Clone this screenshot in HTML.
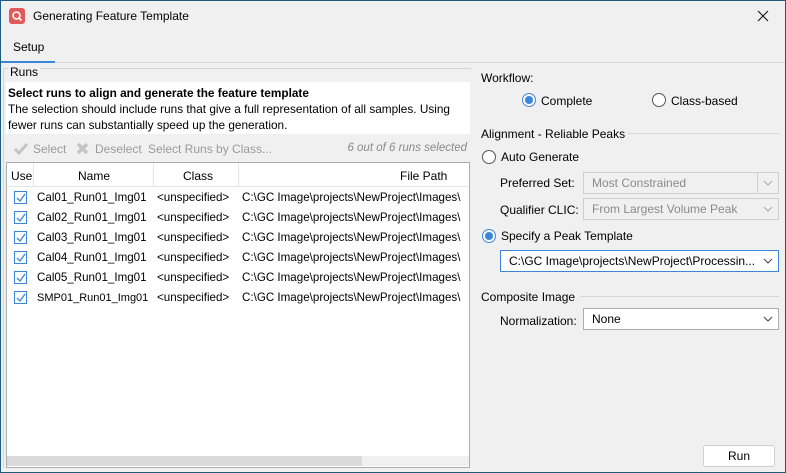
<!DOCTYPE html>
<html><head><meta charset="utf-8"><style>
*{box-sizing:border-box;margin:0;padding:0}
body{width:786px;height:473px;overflow:hidden;background:#f0f0f0;font-family:"Liberation Sans",sans-serif;font-size:12px;color:#000;position:relative}
.a{position:absolute;white-space:nowrap}
.frame{position:absolute;left:0;top:0;width:786px;height:473px;border:1px solid #1f5c80;pointer-events:none}
.radio{position:absolute;width:14px;height:14px;border-radius:50%;border:1px solid #555;background:#fff}
.radio.on{border-color:#3b86d8}
.radio.on::after{content:"";position:absolute;left:2px;top:2px;width:8px;height:8px;border-radius:50%;background:#3b86d8}
.combo{position:absolute;height:22px;border:1px solid #adadad;background:#fff;padding:0 0 0 8px;line-height:20px}
.combo.dis{background:#f0f0f0;color:#8a8a8a;border-color:#cfcfcf}
.arr{position:absolute;right:5px;top:6px;width:10px;height:8px}
.cb{position:absolute;left:14px;width:13px;height:13px;border:1px solid #3b86d8;background:#fff}
.row{position:absolute;left:6px;width:463px;height:20px;line-height:20px;overflow:hidden}
.row span{overflow:hidden}
.n{left:31px;width:118px;font-size:11.6px}
.c{left:151px;width:84px;font-size:11.6px}
.p{left:236px;width:227px;font-size:11.6px}
.line{position:absolute;height:1px;background:#d5d5d5}
</style></head><body>
<div class="frame"></div>
<div class="a" style="left:9px;top:8px;width:16px;height:16px;background:#e05a5a;border-radius:3px"></div>
<svg class="a" style="left:9px;top:8px" width="16" height="16"><circle cx="7.5" cy="7.5" r="3.5" fill="none" stroke="#fff" stroke-width="1.6"/><line x1="10" y1="10" x2="12.5" y2="12.5" stroke="#fff" stroke-width="1.6"/></svg>
<div class="a" style="left:33px;top:9px;font-size:12px">Generating Feature Template</div>
<svg class="a" style="left:757px;top:10px" width="12" height="12"><path d="M1 1L11 11M11 1L1 11" stroke="#111" stroke-width="1.1"/></svg>
<div class="a" style="left:13px;top:40px">Setup</div>
<div class="a" style="left:1px;top:61px;width:54px;height:2px;background:#3b86d8"></div>
<div class="line" style="left:55px;top:62px;width:730px;background:#d9d9d9"></div>
<div class="a" style="left:3px;top:68px;width:468px;height:400px;border-left:1px solid #d5d5d5;border-top:1px solid #d5d5d5"></div>
<div class="a" style="left:8px;top:65px;background:#f0f0f0;padding:0 2px">Runs</div>
<div class="a" style="left:6px;top:82px;width:464px;height:52px;background:#fff"></div>
<div class="a" style="left:8px;top:86px;font-weight:bold;font-size:11.8px">Select runs to align and generate the feature template</div>
<div class="a" style="left:8px;top:102px;font-size:11.8px">The selection should include runs that give a full representation of all samples. Using</div>
<div class="a" style="left:8px;top:118px;font-size:11.8px">fewer runs can substantially speed up the generation.</div>
<svg class="a" style="left:14px;top:142px" width="14" height="14"><path d="M1 7L5 11L13 2" stroke="#c4c4c4" stroke-width="3" fill="none"/></svg>
<div class="a" style="left:33px;top:142px;color:#9a9a9a">Select</div>
<svg class="a" style="left:76px;top:142px" width="13" height="13"><path d="M2 2L11 11M11 2L2 11" stroke="#c4c4c4" stroke-width="3.5"/></svg>
<div class="a" style="left:95px;top:142px;color:#9a9a9a">Deselect</div>
<div class="a" style="left:148px;top:142px;color:#9a9a9a">Select Runs by Class...</div>
<div class="a" style="right:319px;top:142px;color:#8a8a8a;font-style:italic;font-size:11.5px">6 out of 6 runs selected</div>
<div class="a" style="left:6px;top:162px;width:464px;height:306px;border:1px solid #adadad;background:#fff"></div>
<div class="a" style="left:7px;top:163px;width:462px;height:24px;border-bottom:1px solid #e5e5e5"></div>
<div class="a" style="left:33px;top:163px;width:1px;height:24px;background:#e5e5e5"></div>
<div class="a" style="left:153px;top:163px;width:1px;height:24px;background:#e5e5e5"></div>
<div class="a" style="left:238px;top:163px;width:1px;height:24px;background:#e5e5e5"></div>
<div class="a" style="left:11px;top:169px">Use</div>
<div class="a" style="left:78px;top:169px">Name</div>
<div class="a" style="left:183px;top:169px">Class</div>
<div class="a" style="left:400px;top:169px">File Path</div>
<div class="row" style="top:188px"><div class="cb" style="left:8px;top:3px"></div><svg class="a" style="left:9px;top:4px" width="12" height="12"><path d="M2 6L5 9L10 2" stroke="#3b86d8" stroke-width="1.3" fill="none"/></svg><span class="a n">Cal01_Run01_Img01</span><span class="a c">&lt;unspecified&gt;</span><span class="a p">C:\GC Image\projects\NewProject\Images\</span></div>
<div class="row" style="top:208px"><div class="cb" style="left:8px;top:3px"></div><svg class="a" style="left:9px;top:4px" width="12" height="12"><path d="M2 6L5 9L10 2" stroke="#3b86d8" stroke-width="1.3" fill="none"/></svg><span class="a n">Cal02_Run01_Img01</span><span class="a c">&lt;unspecified&gt;</span><span class="a p">C:\GC Image\projects\NewProject\Images\</span></div>
<div class="row" style="top:228px"><div class="cb" style="left:8px;top:3px"></div><svg class="a" style="left:9px;top:4px" width="12" height="12"><path d="M2 6L5 9L10 2" stroke="#3b86d8" stroke-width="1.3" fill="none"/></svg><span class="a n">Cal03_Run01_Img01</span><span class="a c">&lt;unspecified&gt;</span><span class="a p">C:\GC Image\projects\NewProject\Images\</span></div>
<div class="row" style="top:248px"><div class="cb" style="left:8px;top:3px"></div><svg class="a" style="left:9px;top:4px" width="12" height="12"><path d="M2 6L5 9L10 2" stroke="#3b86d8" stroke-width="1.3" fill="none"/></svg><span class="a n">Cal04_Run01_Img01</span><span class="a c">&lt;unspecified&gt;</span><span class="a p">C:\GC Image\projects\NewProject\Images\</span></div>
<div class="row" style="top:268px"><div class="cb" style="left:8px;top:3px"></div><svg class="a" style="left:9px;top:4px" width="12" height="12"><path d="M2 6L5 9L10 2" stroke="#3b86d8" stroke-width="1.3" fill="none"/></svg><span class="a n">Cal05_Run01_Img01</span><span class="a c">&lt;unspecified&gt;</span><span class="a p">C:\GC Image\projects\NewProject\Images\</span></div>
<div class="row" style="top:288px"><div class="cb" style="left:8px;top:3px"></div><svg class="a" style="left:9px;top:4px" width="12" height="12"><path d="M2 6L5 9L10 2" stroke="#3b86d8" stroke-width="1.3" fill="none"/></svg><span class="a n" style="font-size:11px">SMP01_Run01_Img01</span><span class="a c">&lt;unspecified&gt;</span><span class="a p">C:\GC Image\projects\NewProject\Images\</span></div>
<div class="a" style="left:7px;top:456px;width:462px;height:10px;background:#f0f0f0"></div>
<div class="a" style="left:7px;top:456px;width:355px;height:10px;background:#dadada"></div>
<div class="a" style="left:481px;top:71px">Workflow:</div>
<div class="radio on" style="left:522px;top:93px"></div>
<div class="a" style="left:541px;top:94px">Complete</div>
<div class="radio" style="left:652px;top:93px"></div>
<div class="a" style="left:671px;top:94px">Class-based</div>
<div class="a" style="left:481px;top:127px">Alignment - Reliable Peaks</div>
<div class="line" style="left:628px;top:133px;width:151px"></div>
<div class="radio" style="left:482px;top:150px"></div>
<div class="a" style="left:501px;top:150px">Auto Generate</div>
<div class="a" style="left:500px;top:176px">Preferred Set:</div>
<div class="combo dis" style="left:583px;top:172px;width:196px">Most Constrained<div class="a" style="right:20px;top:0;width:1px;height:20px;background:#cfcfcf"></div><svg class="arr" viewBox="0 0 10 8"><path d="M1 2L5 6L9 2" stroke="#aaa" fill="none"/></svg></div>
<div class="a" style="left:500px;top:203px">Qualifier CLIC:</div>
<div class="combo dis" style="left:583px;top:198px;width:196px">From Largest Volume Peak<svg class="arr" viewBox="0 0 10 8"><path d="M1 2L5 6L9 2" stroke="#aaa" fill="none"/></svg></div>
<div class="radio on" style="left:482px;top:229px"></div>
<div class="a" style="left:501px;top:229px">Specify a Peak Template</div>
<div class="combo" style="left:500px;top:250px;width:279px;border-color:#3b86d8">C:\GC Image\projects\NewProject\Processin...<svg class="arr" viewBox="0 0 10 8"><path d="M1 2L5 6L9 2" stroke="#444" fill="none"/></svg></div>
<div class="a" style="left:481px;top:290px">Composite Image</div>
<div class="line" style="left:580px;top:296px;width:199px"></div>
<div class="a" style="left:500px;top:314px">Normalization:</div>
<div class="combo" style="left:583px;top:308px;width:196px">None<svg class="arr" viewBox="0 0 10 8"><path d="M1 2L5 6L9 2" stroke="#444" fill="none"/></svg></div>
<div class="a" style="left:703px;top:445px;width:72px;height:22px;border:1px solid #cfcfcf;border-radius:3px;background:#fff;text-align:center;line-height:20px">Run</div>
</body></html>
